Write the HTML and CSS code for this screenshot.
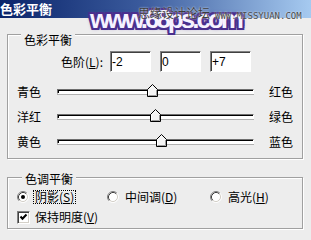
FILE: index.html
```html
<!DOCTYPE html>
<html lang="zh-CN">
<head>
    <meta charset="UTF-8">
    <meta name="viewport" content="width=device-width, initial-scale=1.0">
    <title>色彩平衡</title>
    <link rel="stylesheet" href="styles.css">
</head>
<body>
    <div id="color-balance">
        <div class="titlebar">色彩平衡</div>

        <!-- site watermark sitting over the title bar -->
        <div class="watermark">
            <span class="wm-big">www.68ps.com</span>
            <span class="wm-cn">思缘设计论坛</span>
            <span class="wm-en">WWW.MISSYUAN.COM</span>
        </div>

        <div class="group group-balance">
            <div class="group-title">色彩平衡</div>
            <div class="levels-row">
                <span class="levels-label">色阶(<u>L</u>):</span>
                <input class="level" type="text" value="-2">
                <input class="level" type="text" value="0">
                <input class="level" type="text" value="+7">
            </div>
            <div class="slider-row">
                <span class="slider-left">青色</span>
                <div class="track">
                    <svg class="thumb" style="left: 89px" width="11" height="13" viewBox="0 0 11 13"><path d="M0.5 12.5 V5.5 L5.5 0.5 L10.5 5.5 V12.5 Z" fill="#f4f4f4" stroke="#000"/><path d="M1.5 11.5 V5.9 L5.5 1.9" fill="none" stroke="#fff"/><path d="M1.5 11.5 H9.5 V6" fill="none" stroke="#9a9a9a"/></svg>
                </div>
                <span class="slider-right">红色</span>
            </div>
            <div class="slider-row">
                <span class="slider-left">洋红</span>
                <div class="track">
                    <svg class="thumb" style="left: 92px" width="11" height="13" viewBox="0 0 11 13"><path d="M0.5 12.5 V5.5 L5.5 0.5 L10.5 5.5 V12.5 Z" fill="#f4f4f4" stroke="#000"/><path d="M1.5 11.5 V5.9 L5.5 1.9" fill="none" stroke="#fff"/><path d="M1.5 11.5 H9.5 V6" fill="none" stroke="#9a9a9a"/></svg>
                </div>
                <span class="slider-right">绿色</span>
            </div>
            <div class="slider-row">
                <span class="slider-left">黄色</span>
                <div class="track">
                    <svg class="thumb" style="left: 98px" width="11" height="13" viewBox="0 0 11 13"><path d="M0.5 12.5 V5.5 L5.5 0.5 L10.5 5.5 V12.5 Z" fill="#f4f4f4" stroke="#000"/><path d="M1.5 11.5 V5.9 L5.5 1.9" fill="none" stroke="#fff"/><path d="M1.5 11.5 H9.5 V6" fill="none" stroke="#9a9a9a"/></svg>
                </div>
                <span class="slider-right">蓝色</span>
            </div>
        </div>

        <div class="group group-tone">
            <div class="group-title">色调平衡</div>
            <div class="radio-row">
                <span class="radio-option opt-shadow">
                    <svg class="radio" width="12" height="12" viewBox="0 0 12 12"><circle cx="6" cy="6" r="4.5" fill="#fff"/><path d="M2.11 9.89 A5.5 5.5 0 0 1 9.89 2.11" fill="none" stroke="#808080"/><path d="M9.89 2.11 A5.5 5.5 0 0 1 2.11 9.89" fill="none" stroke="#fff"/><path d="M2.82 9.18 A4.5 4.5 0 0 1 9.18 2.82" fill="none" stroke="#404040"/><path d="M9.18 2.82 A4.5 4.5 0 0 1 2.82 9.18" fill="none" stroke="#d4d0c8"/><circle cx="6" cy="6" r="2" fill="#000"/></svg>
                    <span class="option-text focused">阴影(<u>S</u>)</span>
                </span>
                <span class="radio-option opt-mid">
                    <svg class="radio" width="12" height="12" viewBox="0 0 12 12"><circle cx="6" cy="6" r="4.5" fill="#fff"/><path d="M2.11 9.89 A5.5 5.5 0 0 1 9.89 2.11" fill="none" stroke="#808080"/><path d="M9.89 2.11 A5.5 5.5 0 0 1 2.11 9.89" fill="none" stroke="#fff"/><path d="M2.82 9.18 A4.5 4.5 0 0 1 9.18 2.82" fill="none" stroke="#404040"/><path d="M9.18 2.82 A4.5 4.5 0 0 1 2.82 9.18" fill="none" stroke="#d4d0c8"/></svg>
                    <span class="option-text">中间调(<u>D</u>)</span>
                </span>
                <span class="radio-option opt-high">
                    <svg class="radio" width="12" height="12" viewBox="0 0 12 12"><circle cx="6" cy="6" r="4.5" fill="#fff"/><path d="M2.11 9.89 A5.5 5.5 0 0 1 9.89 2.11" fill="none" stroke="#808080"/><path d="M9.89 2.11 A5.5 5.5 0 0 1 2.11 9.89" fill="none" stroke="#fff"/><path d="M2.82 9.18 A4.5 4.5 0 0 1 9.18 2.82" fill="none" stroke="#404040"/><path d="M9.18 2.82 A4.5 4.5 0 0 1 2.82 9.18" fill="none" stroke="#d4d0c8"/></svg>
                    <span class="option-text">高光(<u>H</u>)</span>
                </span>
            </div>
            <div class="check-row">
                <span class="checkbox">
                    <svg width="9" height="9" viewBox="0 0 9 9"><path d="M1.5 3.5 L3.5 5.7 L7.5 1.5" fill="none" stroke="#000" stroke-width="2"/></svg>
                </span>
                <span class="option-text">保持明度(<u>V</u>)</span>
            </div>
        </div>
    </div>
</body>
</html>
```

FILE: styles.css
```css
body {
    margin: 0;
    background-color: #ededed;
}
#color-balance {
    position: relative;
    width: 311px;
    height: 240px;
    overflow: hidden;
    font-family: "Noto Sans CJK SC", "Liberation Sans", sans-serif;
    font-size: 12px;
    color: #000;
    background-color: #ededed;
}
#color-balance u {
    text-decoration-thickness: 1px;
    text-underline-offset: 1px;
}
.titlebar {
    height: 18px;
    line-height: 17px;
    padding-left: 0;
    font-size: 13px;
    font-weight: bold;
    color: #fff;
    background: linear-gradient(to right, #0a246a 0%, #3a5a9c 45%, #a6caf0 100%);
}

/* watermark */
.watermark {
    position: absolute;
    left: 0;
    top: 0;
    width: 311px;
    height: 36px;
    pointer-events: none;
}
.wm-big {
    position: absolute;
    left: 90px;
    top: 6px;
    font-family: "Liberation Sans", sans-serif;
    font-weight: bold;
    font-size: 26px;
    line-height: 26px;
    letter-spacing: -3px;
    color: #f6f2ff;
    text-shadow:
        2px 0 0 #4a2f8e, -2px 0 0 #4a2f8e, 0 2px 0 #4a2f8e, 0 -2px 0 #4a2f8e,
        2px 2px 0 #4a2f8e, -2px 2px 0 #4a2f8e, 2px -2px 0 #4a2f8e, -2px -2px 0 #4a2f8e,
        0 0 4px #6a55b0;
}
.wm-cn {
    position: absolute;
    left: 138px;
    top: 6px;
    font-size: 12px;
    line-height: 14px;
    color: #3c3c3c;
    text-shadow: 0 0 2px #fff;
}
.wm-en {
    position: absolute;
    left: 215px;
    top: 11px;
    font-family: "DejaVu Sans Mono", monospace;
    font-size: 9px;
    line-height: 11px;
    color: #4a4a4a;
    text-shadow: 0 0 2px #fff;
}

/* group boxes */
.group {
    box-sizing: border-box;
    width: 296px;
    margin-left: 7px;
    border: 1px solid #a0a0a0;
    box-shadow: inset 1px 1px 0 #fff, 1px 1px 0 #fff;
}
.group-balance {
    margin-top: 16px;
    padding-bottom: 4px;
}
.group-tone {
    margin-top: 18px;
    padding-bottom: 4px;
}
.group-title {
    width: fit-content;
    margin: -2px 0 0 13px;
    padding: 0 3px;
    line-height: 14px;
    background-color: #ededed;
}
.group-tone .group-title {
    margin-top: -6px;
    margin-left: 14px;
}

/* levels */
.levels-row {
    display: flex;
    align-items: center;
    margin-top: 4px;
    padding-left: 47px;
    height: 21px;
}
.levels-label {
    width: 48px;
    margin-right: 7px;
    text-align: right;
}
.level {
    box-sizing: border-box;
    width: 41px;
    height: 21px;
    margin: 0 9px 0 0;
    padding: 0 1px;
    font-family: "Liberation Sans", sans-serif;
    font-size: 12px;
    color: #000;
    background: #fff;
    border: 1px solid;
    border-color: #808080 #fff #fff #808080;
    box-shadow: inset 1px 1px 0 #404040;
    outline: none;
}

/* sliders */
.slider-row {
    display: flex;
    align-items: center;
    height: 25px;
    padding-left: 9px;
}
.levels-row + .slider-row {
    margin-top: 7px;
}
.slider-left {
    width: 40px;
}
.slider-right {
    margin-left: 15px;
}
.track {
    position: relative;
    box-sizing: border-box;
    width: 197px;
    height: 5px;
    background: #fff;
    border: 1px solid;
    border-color: #6e6e6e #fff #fff #6e6e6e;
    box-shadow: inset 1px 1px 0 #000, 0 1px 0 #b0b0b0;
}
.thumb {
    position: absolute;
    top: -6px;
    display: block;
}

/* tone options */
.radio-row {
    display: flex;
    align-items: center;
    height: 14px;
    margin-top: 4px;
    padding-left: 9px;
}
.radio-option {
    display: flex;
    align-items: center;
}
.opt-shadow {
    width: 90px;
}
.opt-mid {
    width: 103px;
}
.radio {
    display: block;
    margin-right: 4px;
}
.option-text {
    line-height: 12px;
    padding: 0 1px;
    border: 1px solid transparent;
}
.option-text.focused {
    border: 1px dotted #000;
}
.check-row {
    display: flex;
    align-items: center;
    height: 14px;
    margin-top: 6px;
    padding-left: 9px;
}
.checkbox {
    box-sizing: border-box;
    display: flex;
    align-items: center;
    justify-content: center;
    width: 13px;
    height: 13px;
    margin-right: 3px;
    background: #fff;
    border: 1px solid;
    border-color: #808080 #fff #fff #808080;
    box-shadow: inset 1px 1px 0 #404040, inset -1px -1px 0 #d4d0c8;
}
.checkbox svg {
    display: block;
}
```
